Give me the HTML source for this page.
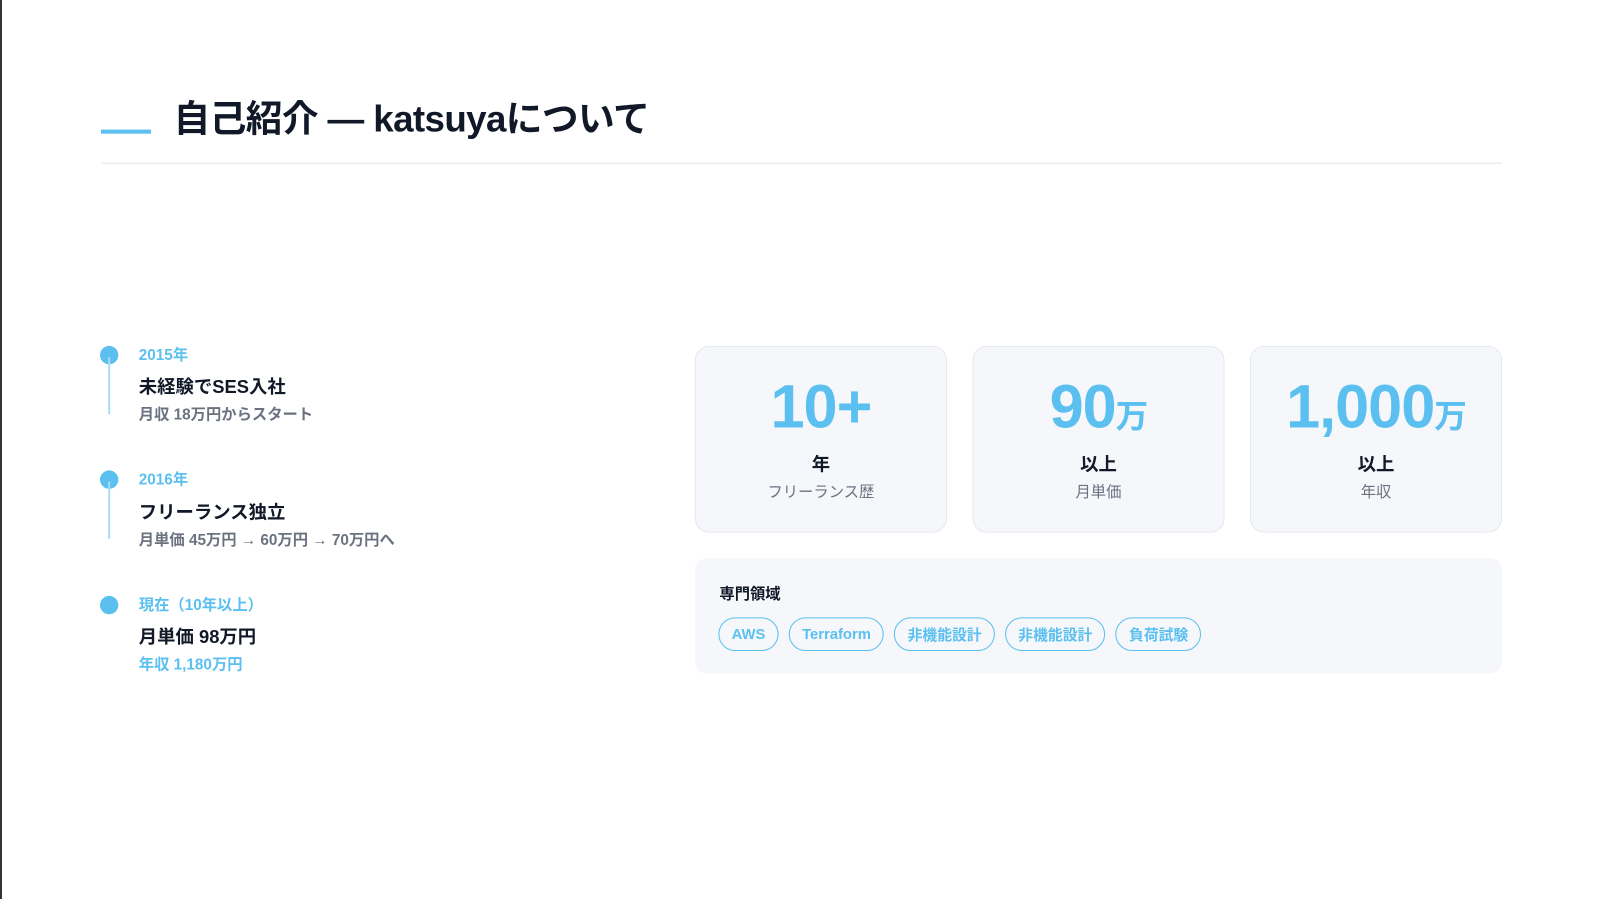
<!DOCTYPE html>
<html><head><meta charset="utf-8"><style>
*{margin:0;padding:0;box-sizing:border-box}
body{width:1600px;height:899px;background:#fff;position:relative;overflow:hidden;font-family:"Liberation Sans","Noto Sans CJK JP",sans-serif;color:#111827}
.edge{position:absolute;left:0;top:0;width:2px;height:899px;background:#333;z-index:2}
.wrap{position:absolute;left:0;top:0;width:1568px;height:881px;transform:scale(1.0204);transform-origin:0 0}
.acc{position:absolute;left:99px;top:127px;width:49px;height:4px;background:#5bc0f0}
h1{position:absolute;left:170px;top:94px;font-size:36px;font-weight:700;letter-spacing:-0.6px;line-height:46px;white-space:nowrap}
.div{position:absolute;left:99px;top:159px;width:1373px;height:2px;background:#eef0f2}
.dot{position:absolute;left:98px;width:18px;height:18px;border-radius:50%;background:#5bc0f0}
.vl{position:absolute;left:106px;width:2px;background:#a9ddf7}
.t{position:absolute;left:136px;white-space:nowrap}
.y{font-size:15px;font-weight:700;color:#5bc0f0}
.h{font-size:18px;font-weight:700;color:#111827}
.s{font-size:15px;font-weight:700;color:#6b7280}
.card{position:absolute;top:339px;width:247px;height:183px;background:#f5f7fa;border:1px solid #e5e8ec;border-radius:14px;text-align:center}
.num{position:absolute;top:23px;left:0;right:0;font-size:60px;font-weight:700;color:#5bc0f0;line-height:72px;letter-spacing:-1px}
.num small{font-size:32px}
.u{position:absolute;top:101px;left:0;right:0;font-size:18px;font-weight:700}
.l{position:absolute;top:131px;left:0;right:0;font-size:15px;color:#6b7280}
.sk{position:absolute;left:681px;top:547px;width:791px;height:113px;background:#f5f7fa;border-radius:12px}
.sk .lab{position:absolute;left:24px;top:24px;font-size:15px;font-weight:700}
.tags{position:absolute;left:23px;top:58px;display:flex;gap:10px}
.tag{height:33px;border:1.5px solid #5bc0f0;border-radius:17px;padding:0 12px;font-size:14.5px;font-weight:700;color:#5bc0f0;display:flex;align-items:center}
</style></head><body>
<div class="edge"></div>
<div class="wrap">
<div class="acc"></div>
<h1>自己紹介 — katsuyaについて</h1>
<div class="div"></div>

<div class="dot" style="top:339px"></div><div class="vl" style="top:350px;height:56px"></div>
<div class="t y" style="top:337px">2015年</div>
<div class="t h" style="top:365px">未経験でSES入社</div>
<div class="t s" style="top:395px">月収 18万円からスタート</div>

<div class="dot" style="top:461px"></div><div class="vl" style="top:472px;height:56px"></div>
<div class="t y" style="top:459px">2016年</div>
<div class="t h" style="top:488px">フリーランス独立</div>
<div class="t s" style="top:518px">月単価 45万円 → 60万円 → 70万円へ</div>

<div class="dot" style="top:584px"></div>
<div class="t y" style="top:582px">現在（10年以上）</div>
<div class="t h" style="top:610px">月単価 98万円</div>
<div class="t y" style="top:640px">年収 1,180万円</div>

<div class="card" style="left:681px"><div class="num">10+</div><div class="u">年</div><div class="l">フリーランス歴</div></div>
<div class="card" style="left:953px"><div class="num">90<small>万</small></div><div class="u">以上</div><div class="l">月単価</div></div>
<div class="card" style="left:1225px"><div class="num">1,000<small>万</small></div><div class="u">以上</div><div class="l">年収</div></div>

<div class="sk"><div class="lab">専門領域</div>
<div class="tags"><span class="tag">AWS</span><span class="tag">Terraform</span><span class="tag">非機能設計</span><span class="tag">非機能設計</span><span class="tag">負荷試験</span></div></div>
</div>
</body></html>
